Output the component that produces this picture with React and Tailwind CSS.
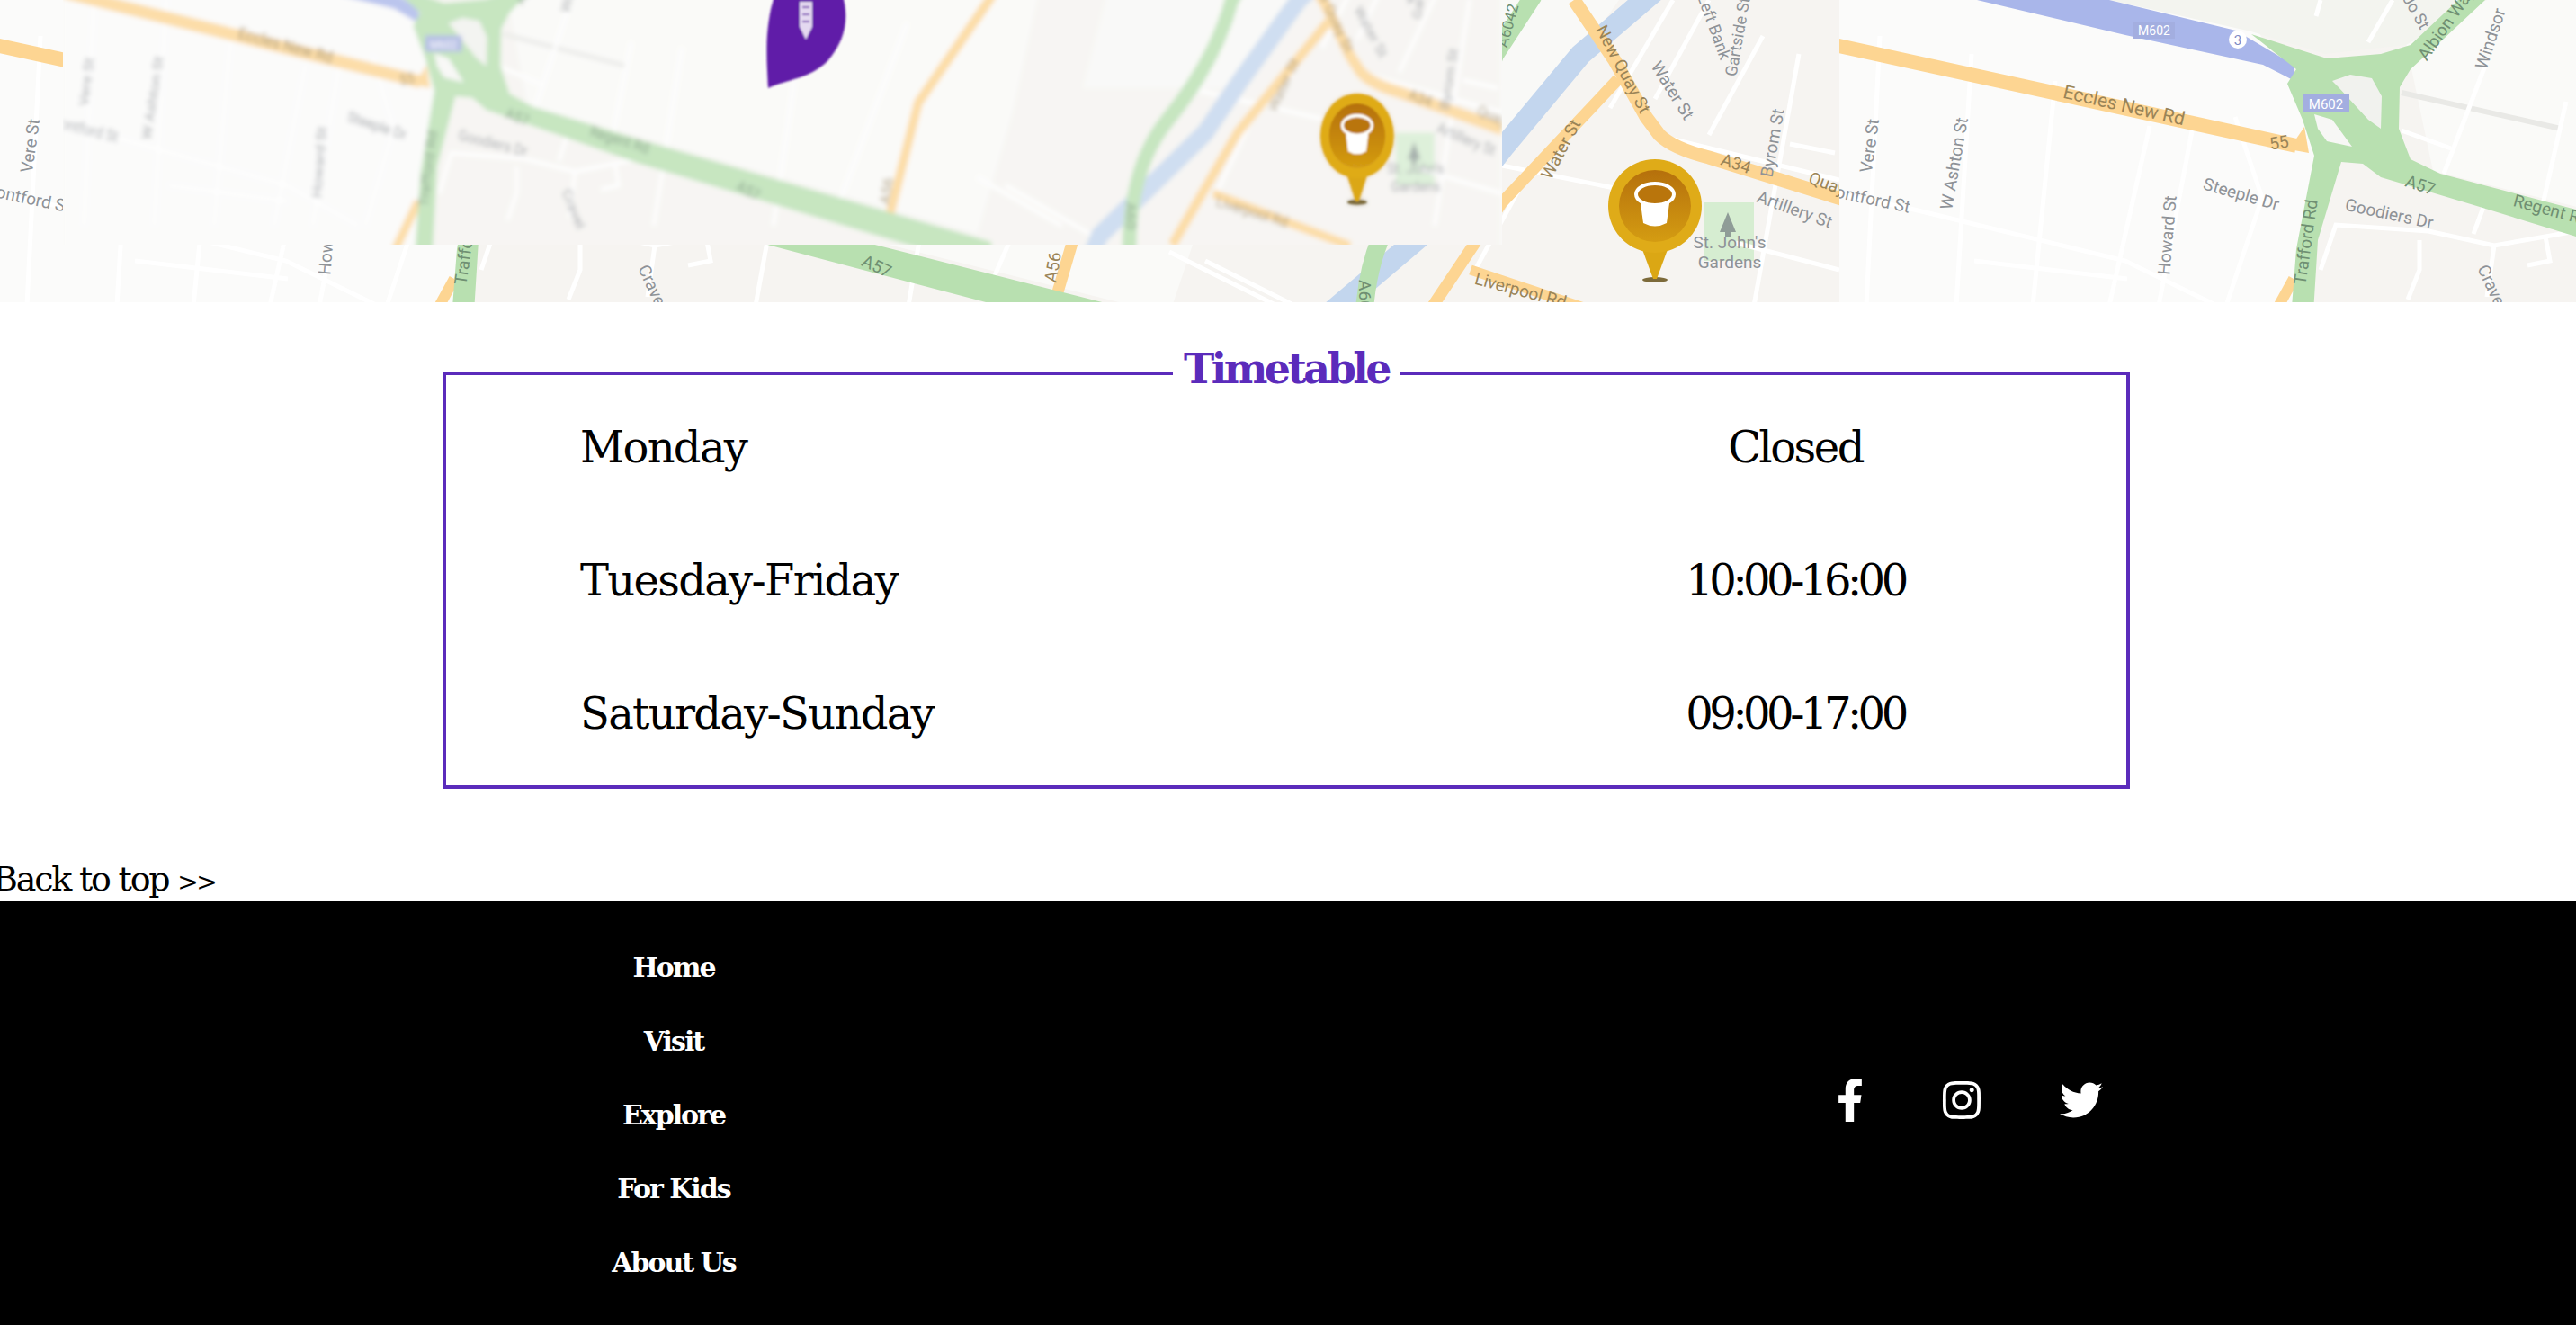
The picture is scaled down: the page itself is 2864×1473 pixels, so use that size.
import { FaFacebookF, FaInstagram, FaTwitter } from "react-icons/fa";

const ORANGE = "#fdd592";
const GREEN = "#b8e0b0";
const BLUE = "#c3d6ee";

// road geometry in map-image coordinates
const streets = [
  "M45,40 L30,340", "M147,60 L130,340", "M79,232 L318,290 L420,340", "M240,90 L215,340",
  "M345,140 L300,340", "M395,130 L355,340", "M-5,215 L79,232", "M150,290 L320,310",
  "M440,130 L470,220 L430,340", "M880,120 L840,340", "M1040,160 L1010,340",
  "M1300,280 L1420,340", "M1340,290 L1460,350", "M1600,170 L1800,210", "M1700,190 L1640,300",
  "M1860,0 L1790,120", "M1900,0 L1840,110", "M1960,40 L1900,150", "M2000,60 L1950,340",
  "M1840,150 L2045,200", "M1930,270 L2045,300", "M1990,160 L2040,170", "M1200,90 L1100,320",
  "M718,73 L672,193", "M808,113 L782,227", "M615,0 L588,47", "M535,0 L530,18",
  "M535,300 L552,250 L655,257 L728,273 L785,263 L819,257", "M645,267 L645,300 L632,333",
  "M728,273 L720,330", "M785,263 L790,290 L765,295", "M625,145 L680,165", "M718,225 L705,260",
];

const labels = [
  ["Eccles New Rd", 315, 124, 13, "#9a8457", 21],
  ["55", 490, 165, -10, "#9a8457", 19],
  ["A57", 644, 212, 18, "#6f8f72", 19],
  ["Regent Rd", 790, 240, 15, "#6f8f72", 19],
  ["Goodiers Dr", 610, 244, 12, "#8e9297", 19],
  ["Trafford Rd", 525, 270, -82, "#6f8f72", 19],
  ["Howard St", 371, 262, -85, "#8e9297", 19],
  ["Steeple Dr", 445, 222, 16, "#8e9297", 19],
  ["W Ashton St", 134, 183, -80, "#8e9297", 19],
  ["Vere St", 40, 163, -82, "#8e9297", 19],
  ["ontford St", 36, 228, 12, "#8e9297", 19],
  ["Windsor", 730, 45, -72, "#8e9297", 19],
  ["Albion Way", 680, 30, -55, "#6f8f72", 19],
  ["Jo St", 636, 16, 60, "#8e9297", 18],
  ["Gartside St", 1938, 42, -80, "#8e9297", 18],
  ["Byrom St", 1977, 160, -80, "#8e9297", 19],
  ["A34", 1928, 188, 18, "#9a8457", 19],
  ["Quay St", 2040, 214, 20, "#9a8457", 19],
  ["Artillery St", 1993, 239, 20, "#8e9297", 19],
  ["St. John's", 1923, 276, 0, "#8e9297", 19],
  ["Gardens", 1923, 298, 0, "#8e9297", 19],
  ["New Quay St", 1799, 80, 62, "#9a8457", 19],
  ["Water St", 1854, 104, 58, "#8e9297", 19],
  ["Water St", 1741, 169, -62, "#9a8457", 19],
  ["Left Bank", 1900, 32, 70, "#8e9297", 18],
  ["Liverpool Rd", 1689, 329, 15, "#9a8457", 19],
  ["A6042", 1682, 30, -75, "#6f8f72", 17],
  ["A60", 1511, 328, 90, "#6f8f72", 19],
  ["A56", 1177, 298, -80, "#9a8457", 19],
  ["A57", 972, 302, 25, "#6f8f72", 19],
  ["Cravel", 720, 322, 65, "#8e9297", 19],
];

function GoldPin({ id }) {
  return (
    <g id={id}>
      <ellipse cx="1840" cy="311" rx="14" ry="3" fill="#7c6a3a" />
      <path d="M1824,272 H1856 L1842,310 H1838 Z" fill="#dba714" />
      <circle cx="1840" cy="229" r="52" fill="#dfab18" />
      <circle cx="1840" cy="229" r="40" fill="url(#pin-inner)" />
      <path d="M1824,226 H1856 L1853,248 Q1840,255 1827,248 Z" fill="#ffffff" />
      <ellipse cx="1840" cy="216" rx="21" ry="12" fill="#b9750c" stroke="#ffffff" strokeWidth="4" />
    </g>
  );
}

function MapTile() {
  return (
    <g id="tile" clipPath="url(#tile-edge)">
      <rect width="2045" height="380" fill="#f6f4f1" />
      <path d="M-5,0 H440 L505,90 L535,180 L500,380 H-5 Z" fill="#fbfbfa" />
      <path d="M620,0 H1400 L1350,200 L1300,350 L660,190 Z" fill="#fafaf8" />
      <path d="M300,0 H720 L630,50 L540,60 L458,35 Z" fill="#f3f4ef" />
      <path d="M1895,225 H1950 V290 H1895 Z" fill="#d6edd1" />
      <path d="M1500,0 H1800 L1680,170 H1450 Z" fill="#f9f9f7" />
      <path d="M625,103 L802,143" fill="none" stroke="#e9e9e6" strokeWidth="6" />

      {streets.map((d) => (
        <path key={d} d={d} fill="none" stroke="#ffffff" strokeWidth="5" />
      ))}

      {/* canal */}
      <path d="M1840,-10 L1757,61 L1673,162 L1624,225 L1474,352 L1460,380" fill="none" stroke={BLUE} strokeWidth="24" />

      {/* main roads */}
      <path d="M-5,50 L508,162" fill="none" stroke={ORANGE} strokeWidth="16" />
      <path d="M500,166 L517,141 L522,170 Z" fill={ORANGE} />
      <path d="M505,310 L472,370" fill="none" stroke={ORANGE} strokeWidth="12" />
      <path d="M1750,0 L1795,67 L1830,130 L1845,150 Q1860,165 1900,175 L2050,222" fill="none" stroke={ORANGE} strokeWidth="15" />
      <path d="M1799,88 L1670,225 L1577,364" fill="none" stroke={ORANGE} strokeWidth="13" />
      <path d="M1635,300 L1830,365" fill="none" stroke={ORANGE} strokeWidth="11" />
      <path d="M1360,0 L1317,61 L1216,188 L1168,352" fill="none" stroke={ORANGE} strokeWidth="13" />

      {/* motorway */}
      <path d="M153,0 H300 L441,34 L505,72 L508,91 L471,72 L318,39 Z" fill="#a9b6ea" />
      <circle cx="443" cy="44" r="10" fill="#ffffff" />
      <text x="443" y="50" fontSize="15" fill="#7e8bc4" textAnchor="middle" fontFamily="Roboto">3</text>
      <rect x="327" y="25" width="46" height="18" fill="#a3aee0" />
      <text x="350" y="39" fontSize="14" fill="#ffffff" textAnchor="middle" fontFamily="Roboto">M602</text>

      {/* green trunk roads */}
      <path
        d="M458,38 L542,65 L602,60 L635,50 L688,0 H718 L672,43 L635,77 L623,97 L622,143 L635,177 L668,193 L819,233 L1320,360 V395 L819,263 L712,230 L602,197 L582,182 L558,180 L532,267 L525,380 H500 L508,277 L528,173 L515,133 L498,93 L508,77 Z"
        fill={GREEN}
      />
      <path d="M548,90 L568,83 L592,87 L603,107 L602,143 L588,133 L555,97 Z" fill="#f1f2ee" />
      <path d="M528,127 L548,133 L570,163 L542,157 L532,143 Z" fill="#f7f7f5" />
      <path d="M1705,-5 L1662,61 Q1639,136 1570,210 Q1514,270 1516,380" fill="none" stroke={GREEN} strokeWidth="20" />
      <rect x="515" y="105" width="52" height="20" fill="#a3aee0" />
      <text x="541" y="121" fontSize="15" fill="#ffffff" textAnchor="middle" fontFamily="Roboto">M602</text>

      {/* tree */}
      <path d="M1921,236 L1930,258 H1924 V264 H1918 V258 H1912 Z" fill="#8f9c97" />

      {labels.map(([text, x, y, rot, color, size], i) => (
        <text
          key={i}
          x={x}
          y={y}
          fontSize={size}
          fill={color}
          fontFamily="Roboto"
          textAnchor="middle"
          transform={`rotate(${rot} ${x} ${y})`}
        >
          {text}
        </text>
      ))}

      <GoldPin id="gold-pin" />
    </g>
  );
}

function MapBanner() {
  return (
    <div className="h-[336px] overflow-hidden">
      <svg width="2864" height="336" viewBox="0 0 2864 336" className="block">
        <defs>
          <clipPath id="tile-edge">
            <rect width="2045" height="380" />
          </clipPath>
          <clipPath id="overlay-edge">
            <rect x="70" y="0" width="1600" height="272" />
          </clipPath>
          <linearGradient id="pin-inner" x1="0" y1="0" x2="0" y2="1">
            <stop offset="0" stopColor="#b5700c" />
            <stop offset="1" stopColor="#d49c12" />
          </linearGradient>
          <filter id="soft" x="-5%" y="-5%" width="110%" height="110%">
            <feGaussianBlur stdDeviation="2.4" />
          </filter>
          <filter id="softer" x="-10%" y="-10%" width="120%" height="120%">
            <feGaussianBlur stdDeviation="1" />
          </filter>
        </defs>

        <MapTile />
        <use href="#tile" x="2045" />

        {/* stretched copy over the left part */}
        <g clipPath="url(#overlay-edge)">
          <rect x="70" y="0" width="1600" height="272" fill="#fbfbfa" />
          <g filter="url(#soft)" opacity="0.78">
            <use href="#tile" transform="translate(70 -55) scale(0.782 0.9)" />
          </g>
          <g filter="url(#softer)">
            <use href="#gold-pin" transform="translate(70 -55) scale(0.782 0.9)" />
            <path
              d="M854,98 C852,60 851,40 857,10 L862,-8 H936 C945,20 940,45 920,68 C900,88 875,88 854,98 Z"
              fill="#601fa8"
            />
            <path d="M889,2 H903 V30 L896,44 L889,30 Z" fill="#e4d9f0" />
            <path d="M892,8 H900 M892,16 H900 M892,24 H900" stroke="#7a45b5" strokeWidth="2" />
          </g>
        </g>
      </svg>
    </div>
  );
}

const hours = [
  ["Monday", "Closed", "tracking-[-2.5px]"],
  ["Tuesday-Friday", "10:00-16:00", "tracking-[-4.5px]"],
  ["Saturday-Sunday", "09:00-17:00", "tracking-[-4.5px]"],
];

const footerLinks = ["Home", "Visit", "Explore", "For Kids", "About Us"];

export default function App() {
  return (
    <div className="h-[1473px] w-full overflow-hidden bg-white font-['DejaVu_Serif',serif] text-black">
      <MapBanner />

      {/* TIMETABLE */}
      <fieldset className="mt-[51px] ml-[492px] w-[1876px] border-4 border-[#5b2bbb]">
        <legend className="mx-auto px-3 pb-[10px] text-[46px] leading-[46px] font-bold tracking-[-3.5px] text-[#5b2bbb]">
          Timetable
        </legend>
        <div className="flex flex-col gap-[92px] px-[149px] pt-[26px] pb-[52px] text-[48px] leading-[56px] tracking-[-1.7px]">
          {hours.map(([day, time, fit]) => (
            <div key={day} className="grid grid-cols-[1fr_438px]">
              <span>{day}</span>
              <span className={`text-center ${fit}`}>{time}</span>
            </div>
          ))}
        </div>
      </fieldset>

      <div className="mt-[75px] -ml-[8px] h-[50px] text-[38px] leading-[50px] tracking-[-2.2px]">
        Back to top <span className="text-[28px] tracking-[-2.5px]">{">>"}</span>
      </div>

      {/* FOOTER */}
      <footer className="flex h-[471px] bg-black text-white">
        <nav className="ml-[549px] flex w-[400px] flex-col items-center pt-[33px] text-[30px] leading-[82px] font-bold tracking-[-2px]">
          {footerLinks.map((link) => (
            <a key={link} href="#">
              {link}
            </a>
          ))}
        </nav>
        <div className="mt-[197px] ml-[1084px] flex items-start">
          <FaFacebookF size={48} />
          <FaInstagram size={48} className="ml-[76px]" />
          <FaTwitter size={48} className="ml-[85px]" />
        </div>
      </footer>
    </div>
  );
}
